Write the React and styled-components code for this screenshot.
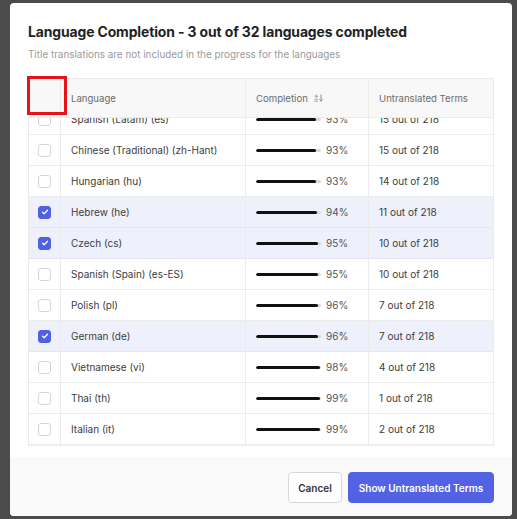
import React, { useLayoutEffect, useRef } from "react";
import styled, { createGlobalStyle } from "styled-components";

const Global = createGlobalStyle`
  html, body { margin: 0; padding: 0; }
  body {
    background: #4b4b4b;
    font-family: Inter, "Noto Sans", "Liberation Sans", sans-serif;
    -webkit-font-smoothing: antialiased;
  }
`;

const Backdrop = styled.div`
  width: 517px;
  height: 519px;
  padding: 3px 5px 3px 10px;
  box-sizing: border-box;
  display: flex;
`;

const Modal = styled.div`
  flex: 1;
  background: #fff;
  border-radius: 4px;
  display: flex;
  flex-direction: column;
  overflow: hidden;
`;

const Body = styled.div`
  padding: 19px 18px 11px 18px;
  display: flex;
  flex-direction: column;
`;

const Title = styled.h2`
  margin: 0;
  font-size: 13.9px;
  line-height: 20px;
  font-weight: 700;
  color: #222;
  letter-spacing: -0.1px;
`;

const Subtitle = styled.p`
  margin: 5px 0 0;
  font-size: 9.9px;
  line-height: 14px;
  color: #9a9a9a;
`;

const TableBox = styled.div`
  position: relative;
  margin-top: 17px;
  height: 366px;
  border: 1px solid #ebebeb;
  border-bottom-color: #efefef;
`;

const Scroller = styled.div`
  height: 100%;
  overflow-y: auto;
  scrollbar-width: none;
  &::-webkit-scrollbar { display: none; }
`;

const Row = styled.div`
  display: grid;
  grid-template-columns: 32px 185px 123px 1fr;
  height: ${(p) => (p.$head ? "39px" : "31px")};
  background: ${(p) => (p.$head ? "#f8f8f8" : p.$selected ? "#eef0fb" : "#fff")};
  border-bottom: 1px solid ${(p) => (p.$selected ? "#e3e6f3" : "#ececec")};
  box-sizing: border-box;
  ${(p) => p.$head && "position: sticky; top: 0; z-index: 2;"}
`;

const Cell = styled.div`
  display: flex;
  align-items: center;
  padding-left: ${(p) => (p.$center ? "0" : "10px")};
  justify-content: ${(p) => (p.$center ? "center" : "flex-start")};
  border-right: 1px solid #ececec;
  font-size: ${(p) => (p.$head ? "9.6px" : "10px")};
  color: ${(p) => (p.$head ? "#6b6b6b" : "#3d3d3d")};
  white-space: nowrap;
  overflow: hidden;
  &:last-child { border-right: none; }
`;

const Box = styled.span`
  width: 13px;
  height: 13px;
  box-sizing: border-box;
  border-radius: 3px;
  border: 1px solid ${(p) => (p.$checked ? "#5060e2" : "#d6d6d6")};
  background: ${(p) => (p.$checked ? "#5060e2" : "#fff")};
  display: flex;
  align-items: center;
  justify-content: center;
`;

const Track = styled.span`
  width: 65px;
  height: 3px;
  border-radius: 2px;
  background: #d9d9d9;
  display: flex;
  overflow: hidden;
`;

const Fill = styled.span`
  height: 100%;
  background: #111;
  border-radius: 2px;
`;

const Pct = styled.span`
  margin-left: 5px;
  color: #555;
`;

const SortIcon = styled.svg`
  margin-left: 6px;
  width: 9px;
  height: 8px;
`;

const Marker = styled.div`
  position: absolute;
  left: -2px;
  top: -3px;
  width: 40px;
  height: 39px;
  box-sizing: border-box;
  border: 3px solid #e8121b;
  z-index: 3;
  pointer-events: none;
`;

const Footer = styled.div`
  margin-top: auto;
  background: #f9f9f9;
  height: 59px;
  box-sizing: border-box;
  padding: 15px 18px 0;
  display: flex;
  justify-content: flex-end;
  align-items: flex-start;
  gap: 6px;
`;

const Button = styled.button`
  height: 31px;
  border-radius: 4px;
  font-family: inherit;
  font-size: 10px;
  font-weight: 600;
  white-space: nowrap;
  padding: 0;
  border: 1px solid ${(p) => (p.$primary ? "#5262e2" : "#d9d9d9")};
  background: ${(p) => (p.$primary ? "#5262e2" : "#fff")};
  color: ${(p) => (p.$primary ? "#fff" : "#333")};
  width: ${(p) => (p.$primary ? "146px" : "54px")};
`;

const rows = [
  ["Spanish (Latam) (es)", 93, "15 out of 218", false],
  ["Chinese (Traditional) (zh-Hant)", 93, "15 out of 218", false],
  ["Hungarian (hu)", 93, "14 out of 218", false],
  ["Hebrew (he)", 94, "11 out of 218", true],
  ["Czech (cs)", 95, "10 out of 218", true],
  ["Spanish (Spain) (es-ES)", 95, "10 out of 218", false],
  ["Polish (pl)", 96, "7 out of 218", false],
  ["German (de)", 96, "7 out of 218", true],
  ["Vietnamese (vi)", 98, "4 out of 218", false],
  ["Thai (th)", 99, "1 out of 218", false],
  ["Italian (it)", 99, "2 out of 218", false],
];

function Check({ checked }) {
  return (
    <Box $checked={checked}>
      {checked && (
        <svg width="8" height="8" viewBox="0 0 8 8">
          <path d="M1.5 4.2 L3.2 5.8 L6.5 2.3" fill="none" stroke="#fff" strokeWidth="1.3" strokeLinecap="round" strokeLinejoin="round" />
        </svg>
      )}
    </Box>
  );
}

export default function App() {
  const ref = useRef(null);
  useLayoutEffect(() => {
    if (ref.current) ref.current.scrollTop = 14;
  }, []);
  return (
    <>
      <Global />
      <Backdrop>
        <Modal>
          <Body>
            <Title>Language Completion - 3 out of 32 languages completed</Title>
            <Subtitle>Title translations are not included in the progress for the languages</Subtitle>
            <TableBox>
              <Marker />
              <Scroller ref={ref}>
                <Row $head>
                  <Cell $head $center />
                  <Cell $head>Language</Cell>
                  <Cell $head>
                    Completion
                    <SortIcon viewBox="0 0 9 8">
                      <path d="M0.5 2.2 H4 M2.25 0.6 V3.8 M0.5 5.3 H4 M0.5 7.2 H4" stroke="#9a9a9a" strokeWidth="0.9" fill="none" />
                      <path d="M7 0.6 V7 M5.4 5.4 L7 7.2 L8.6 5.4" stroke="#8a8a8a" strokeWidth="1" fill="none" />
                    </SortIcon>
                  </Cell>
                  <Cell $head>Untranslated Terms</Cell>
                </Row>
                {rows.map(([name, pct, terms, sel]) => (
                  <Row key={name} $selected={sel}>
                    <Cell $center>
                      <Check checked={sel} />
                    </Cell>
                    <Cell>{name}</Cell>
                    <Cell>
                      <Track>
                        <Fill style={{ width: `${pct}%` }} />
                      </Track>
                      <Pct>{pct}%</Pct>
                    </Cell>
                    <Cell>{terms}</Cell>
                  </Row>
                ))}
              </Scroller>
            </TableBox>
          </Body>
          <Footer>
            <Button>Cancel</Button>
            <Button $primary>Show Untranslated Terms</Button>
          </Footer>
        </Modal>
      </Backdrop>
    </>
  );
}
